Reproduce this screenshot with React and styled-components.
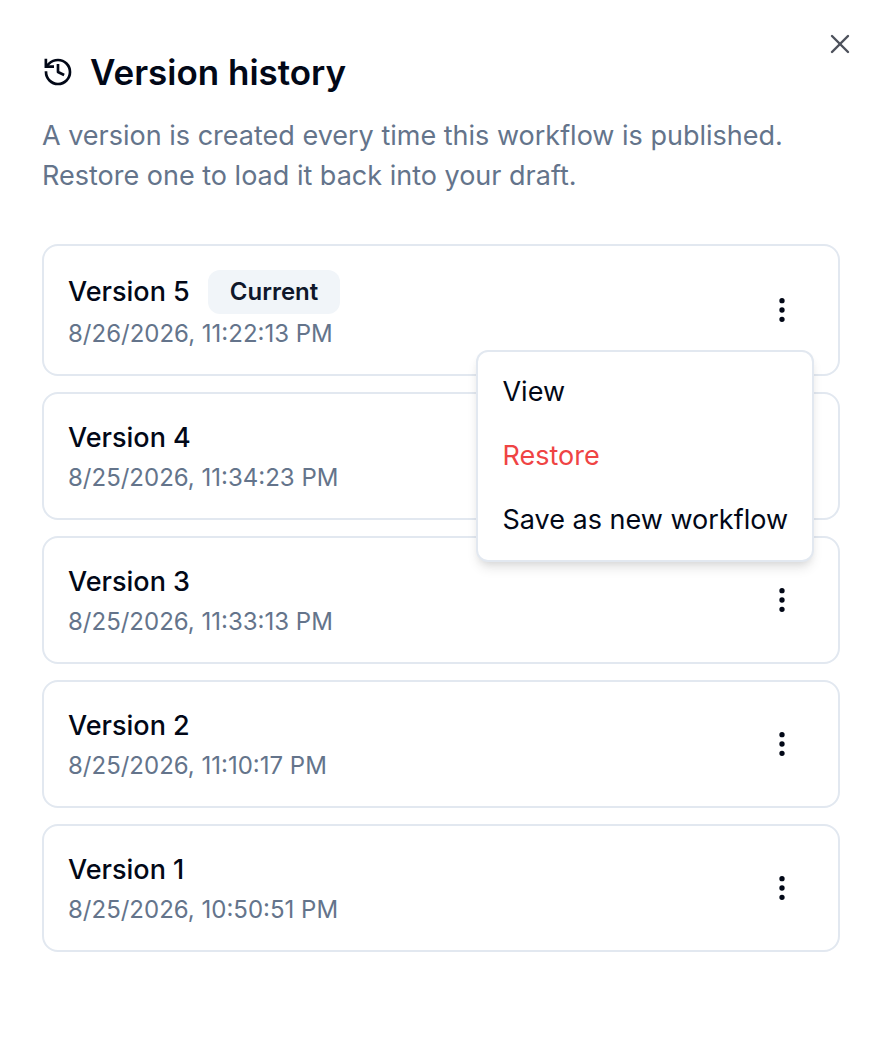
import React, { useState } from "react";
import styled, { createGlobalStyle } from "styled-components";
import { EllipsisVertical, X } from "lucide-react";

const versionList = [
  { id: 5, createdAt: "8/26/2026, 11:22:13 PM", current: true },
  { id: 4, createdAt: "8/25/2026, 11:34:23 PM" },
  { id: 3, createdAt: "8/25/2026, 11:33:13 PM" },
  { id: 2, createdAt: "8/25/2026, 11:10:17 PM" },
  { id: 1, createdAt: "8/25/2026, 10:50:51 PM" },
];

const HistoryIcon = () => (
  <svg
    width="32"
    height="32"
    viewBox="0 0 24 24"
    fill="none"
    stroke="currentColor"
    strokeWidth="2"
    aria-hidden="true"
  >
    <path d="M3 11.4v.6a9 9 0 1 0 9-9 9.75 9.75 0 0 0-6.74 2.74L3 8" />
    <path d="M2.9 2v6H9" />
    <path d="M12 6v6l4.6 2.3" strokeLinejoin="round" />
  </svg>
);

const VersionItem = (props) => {
  const { version, isOpen, onToggle } = props;

  return (
    <Card>
      <Info>
        <NameRow>
          <Name>Version {version.id}</Name>
          {version.current ? <Badge>Current</Badge> : null}
        </NameRow>
        <CreatedAt>{version.createdAt}</CreatedAt>
      </Info>

      <MenuWrap>
        <MenuBtn
          type="button"
          aria-label={`Version ${version.id} actions`}
          aria-expanded={isOpen}
          onClick={onToggle}
        >
          <EllipsisVertical size={32} />
        </MenuBtn>
        {isOpen ? (
          <Menu role="menu">
            <MenuItem type="button" role="menuitem">View</MenuItem>
            <MenuItem type="button" role="menuitem" $danger>Restore</MenuItem>
            <MenuItem type="button" role="menuitem">Save as new workflow</MenuItem>
          </Menu>
        ) : null}
      </MenuWrap>
    </Card>
  );
};

const App = () => {
  const [openId, setOpenId] = useState(5);

  const handleToggle = (id) => {
    setOpenId(openId === id ? null : id);
  };

  return (
    <>
      <GlobalStyle />
      <Panel>
        <CloseBtn type="button" aria-label="Close">
          <X size={32} strokeWidth={1.8} />
        </CloseBtn>
        <Header>
          <Title>
            <HistoryIcon />
            Version history
          </Title>
          <Description>
            A version is created every time this workflow is published. Restore
            one to load it back into your draft.
          </Description>
        </Header>
        <List>
          {versionList.map((version) => (
            <VersionItem
              key={version.id}
              version={version}
              isOpen={openId === version.id}
              onToggle={() => handleToggle(version.id)}
            />
          ))}
        </List>
      </Panel>
    </>
  );
};

const GlobalStyle = createGlobalStyle`
  * {
    box-sizing: border-box;
  }
  body {
    margin: 0;
    background-color: #fff;
    color: #020817;
    font-family: Inter, "Liberation Sans", sans-serif;
  }
  button {
    margin: 0;
    border: none;
    background: none;
    color: inherit;
    font-family: inherit;
    cursor: pointer;
  }
`;
const Panel = styled.section`
  position: relative;
  min-height: 100vh;
  padding: 48px 42px;
`;
const CloseBtn = styled.button`
  position: absolute;
  top: 28px;
  right: 26px;
  display: flex;
  padding: 0;
  opacity: 0.7;
`;
const Header = styled.header`
  display: flex;
  flex-direction: column;
  gap: 20px;
`;
const Title = styled.h2`
  display: flex;
  align-items: center;
  gap: 16px;
  margin: 0;
  font-size: 35px;
  font-weight: 600;
  line-height: 48px;
`;
const Description = styled.p`
  margin: 0;
  color: #64748b;
  font-size: 27px;
  line-height: 40px;
`;
const List = styled.ul`
  display: flex;
  flex-direction: column;
  gap: 16px;
  margin: 48px 0 0;
  padding: 0;
  list-style: none;
`;
const Card = styled.li`
  display: flex;
  align-items: center;
  justify-content: space-between;
  padding: 24px;
  border: 2px solid #e2e8f0;
  border-radius: 16px;
`;
const Info = styled.div`
  display: flex;
  flex-direction: column;
  gap: 4px;
`;
const NameRow = styled.div`
  display: flex;
  align-items: center;
  gap: 18px;
`;
const Name = styled.span`
  font-size: 27px;
  font-weight: 500;
  line-height: 40px;
`;
const Badge = styled.span`
  padding: 6px 22px;
  border-radius: 12px;
  background-color: #f1f5f9;
  color: #0f172a;
  font-size: 24px;
  font-weight: 600;
  line-height: 32px;
`;
const CreatedAt = styled.span`
  color: #64748b;
  font-size: 24px;
  line-height: 32px;
`;
const MenuWrap = styled.div`
  position: relative;
`;
const MenuBtn = styled.button`
  display: flex;
  align-items: center;
  justify-content: center;
  width: 64px;
  height: 64px;
  padding: 0;
`;
const Menu = styled.div`
  position: absolute;
  top: 100%;
  right: 0;
  z-index: 10;
  margin-top: 8px;
  padding: 8px;
  border: 2px solid #e2e8f0;
  border-radius: 12px;
  background-color: #fff;
  box-shadow: 0 8px 12px -2px rgba(0, 0, 0, 0.1), 0 4px 8px -4px rgba(0, 0, 0, 0.1);
`;
const MenuItem = styled.button`
  display: block;
  width: 100%;
  padding: 12px 16px;
  color: ${(props) => (props.$danger ? "#ef4444" : "inherit")};
  font-size: 27px;
  line-height: 40px;
  text-align: left;
  white-space: nowrap;
`;

export default App;
